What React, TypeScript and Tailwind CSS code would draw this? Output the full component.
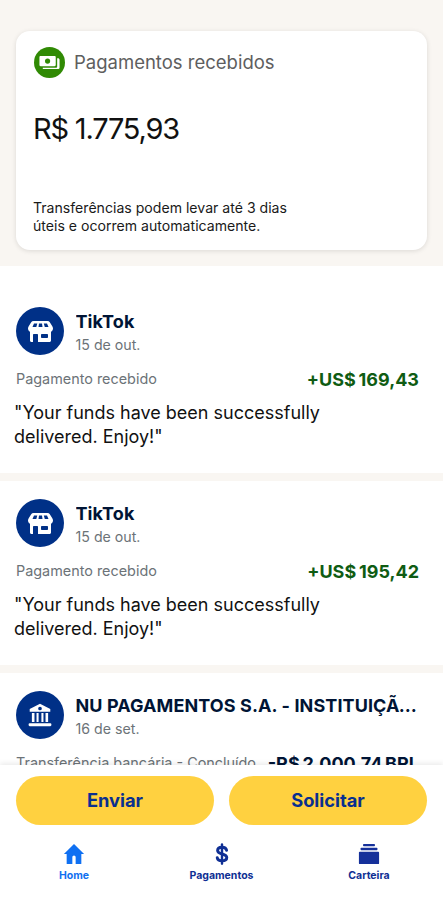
const font = { fontFamily: "Inter, 'Noto Sans', sans-serif" };

function StoreIcon() {
  return (
    <svg viewBox="0 0 25 21" className="w-[25px] h-[21px]" fill="#fff">
      <path
        fillRule="evenodd"
        d="M5.500 0h14c1 0 1.800.4 2.300 1.200l2.500 4c.5.8.7 1.500.7 2.300 0 1.500-.9 2.700-2 3.200V19.500c0 .8-.7 1.500-1.500 1.500h-18C2.700 21 2 20.300 2 19.500v-8.800C.9 10.200 0 9 0 7.500c0-.8.2-1.500.7-2.300l2.500-4C3.700.4 4.500 0 5.500 0zM6 2.500L4.500 6h3.800l1-3.500H6zm5 0L10.500 6h4L14 2.500h-3zm4.800 0l1 3.500h3.700L19 2.500h-3.200zM5 14v7h5v-7c0-.6-.4-1-1-1H6c-.6 0-1 .4-1 1zm8-.2v2.400c0 .5.300.8.800.8h5.400c.5 0 .8-.3.800-.8v-2.400c0-.5-.3-.8-.8-.8h-5.400c-.5 0-.8.300-.8.800z"
      />
    </svg>
  );
}

function BankIcon() {
  return (
    <svg viewBox="0 0 24 24" className="w-[26px] h-[26px]" fill="#fff">
      <path
        fillRule="evenodd"
        d="M12 1.500l9.500 5v2.500h-19V6.500L12 1.500zm0 2.800a1.700 1.700 0 100 3.400 1.700 1.700 0 000-3.400z"
      />
      <path d="M4.500 10.200h2.400v8.300H4.500zM8.800 10.200h1.900v8.300H8.800zM13.300 10.200h1.900v8.300h-1.900zM17.100 10.200h2.400v8.300h-2.400z" />
      <rect x="1.500" y="19.500" width="21" height="2.800" rx="1" />
    </svg>
  );
}

function MoneyIcon() {
  return (
    <svg viewBox="0 0 24 24" className="w-[23px] h-[23px]">
      <path fill="#fff" d="M1.500 6.300c0-.7.5-1.200 1.200-1.200h14.600c.7 0 1.200.5 1.200 1.200v8.400c0 .7-.5 1.200-1.200 1.200H2.700c-.7 0-1.200-.5-1.200-1.200V6.300z" />
      <circle cx="10" cy="10.500" r="2.700" fill="#308a04" />
      <path fill="#fff" d="M20 7.500h.8c.9 0 1.700.7 1.700 1.600v8c0 1-.8 1.800-1.800 1.800H5v-1.500h14c.6 0 1-.4 1-1V7.500z" />
    </svg>
  );
}

function Item({
  icon,
  title,
  date,
  label,
  amount,
  amountClass,
  note,
  className,
}: {
  icon: React.ReactNode;
  title: string;
  date: string;
  label: string;
  amount: string;
  amountClass: string;
  note?: string;
  className: string;
}) {
  return (
    <div className={`bg-white pl-4 pr-6 ${className}`}>
      <div className="flex items-center gap-[11.5px]">
        <div className="w-12 h-12 shrink-0 rounded-full bg-[#003087] flex items-center justify-center">{icon}</div>
        <div className="min-w-0 flex-1">
          <div className="text-[18px] leading-[26px] font-bold tracking-[0.1px] text-[#001435] truncate -mr-1">{title}</div>
          <div className="text-[14.2px] leading-[18px] text-[#6c7378] mt-[1px]">{date}</div>
        </div>
      </div>
      <div className="flex items-center justify-between mt-3 h-[24px]">
        <span className="text-[14.4px] text-[#6c7378] whitespace-nowrap">{label}</span>
        <span className={`text-[18px] font-bold whitespace-nowrap [word-spacing:-1.5px] ${amountClass}`}>{amount}</span>
      </div>
      {note && (
        <p className="mt-[10px] text-[18px] leading-[24px] text-[#111] -ml-0.5 w-[340px]">{note}</p>
      )}
    </div>
  );
}

function NavItem({ icon, label, color }: { icon: React.ReactNode; label: string; color: string }) {
  return (
    <div className="flex flex-col items-center w-[90px]">
      <div className="h-[21px] flex items-center justify-center">{icon}</div>
      <span className={`mt-[5px] text-[10.5px] leading-[14px] font-bold ${color}`}>{label}</span>
    </div>
  );
}

export default function App() {
  const note = '"Your funds have been successfully delivered. Enjoy!"';
  return (
    <div className="h-[899px] w-full flex flex-col overflow-hidden bg-[#f9f6f2]" style={font}>
      <main className="flex-1 min-h-0 overflow-hidden">
        <section className="px-4 pt-[31px] pb-4">
          <div className="h-[219px] rounded-[14px] bg-white shadow-[0_1px_5px_rgba(0,0,0,0.12)] pl-[18px] pr-4 pt-4">
            <div className="flex items-center gap-[9px]">
              <div className="w-[31px] h-[31px] rounded-full bg-[#308a04] flex items-center justify-center">
                <MoneyIcon />
              </div>
              <span className="text-[18.5px] text-[#5e5e5e]">Pagamentos recebidos</span>
            </div>
            <div className="mt-[33px] -ml-px text-[29px] leading-[36px] text-[#111] tracking-[-1.2px]">R$ 1.775,93</div>
            <p className="mt-[52px] -ml-px text-[14.1px] leading-[18px] text-[#1a1a1a] w-[265px]">
              Transferências podem levar até 3 dias úteis e ocorrem automaticamente.
            </p>
          </div>
        </section>
        <div className="flex flex-col gap-2">
          <Item
            className="pt-[41px] h-[207px]"
            icon={<StoreIcon />}
            title="TikTok"
            date="15 de out."
            label="Pagamento recebido"
            amount="+US$ 169,43"
            amountClass="text-[#0f5c13]"
            note={note}
          />
          <Item
            className="pt-[18px] h-[184px]"
            icon={<StoreIcon />}
            title="TikTok"
            date="15 de out."
            label="Pagamento recebido"
            amount="+US$ 195,42"
            amountClass="text-[#0f5c13]"
            note={note}
          />
          <Item
            className="pt-[18px] h-[200px]"
            icon={<BankIcon />}
            title="NU PAGAMENTOS S.A. - INSTITUIÇÃO DE PAGAMENTO"
            date="16 de set."
            label="Transferência bancária - Concluído"
            amount="-R$ 2.000,74 BRL"
            amountClass="text-[#001435]"
          />
        </div>
      </main>
      <footer className="h-[134px] shrink-0 bg-white shadow-[0_-2px_5px_rgba(0,0,0,0.08)] relative">
        <div className="flex gap-[15px] px-4 pt-[11px]">
          <button className="flex-1 h-[49px] rounded-full bg-[#ffd140] text-[18.3px] font-bold text-[#0a2f8f]">Enviar</button>
          <button className="flex-1 h-[49px] rounded-full bg-[#ffd140] text-[18.3px] font-bold text-[#0a2f8f]">Solicitar</button>
        </div>
        <nav className="flex justify-between px-[29px] mt-[18px]">
          <NavItem
            label="Home"
            color="text-[#1070f0]"
            icon={
              <svg viewBox="0 0 24 24" className="w-[22px] h-[22px]" fill="#0f70f2">
                <path
                  fillRule="evenodd"
                  d="M12 1L1 12h3v10.500c0 .3.200.5.500.5h15c.3 0 .5-.2.500-.5V12h3L12 1zM10.200 15.500c0-1 .8-1.800 1.800-1.800s1.800.8 1.800 1.800V23h-3.600v-7.500z"
                />
              </svg>
            }
          />
          <NavItem
            label="Pagamentos"
            color="text-[#0f2f94]"
            icon={
              <svg viewBox="0 0 24 24" className="w-[22px] h-[22px]" fill="none" stroke="#0f2f94" strokeWidth="3.200" strokeLinecap="round">
                <path d="M12 1.500v21" strokeWidth="2.600" />
                <path d="M17 8c-.4-2.200-2.300-3.400-5-3.400-2.700 0-4.800 1.300-4.800 3.500 0 5 10 2.800 10 7.800 0 2.200-2.300 3.500-5.200 3.500-2.800 0-4.800-1.200-5.200-3.400" />
              </svg>
            }
          />
          <NavItem
            label="Carteira"
            color="text-[#0f2f94]"
            icon={
              <svg viewBox="0 0 24 24" className="w-[22px] h-[22px]" fill="#15309a">
                <rect x="5.500" y="1" width="13" height="2.600" rx="0.800" />
                <rect x="2.800" y="5.200" width="18.400" height="2.800" rx="0.800" />
                <rect x="1" y="9.500" width="22" height="13.500" rx="1" />
              </svg>
            }
          />
        </nav>
      </footer>
    </div>
  );
}
